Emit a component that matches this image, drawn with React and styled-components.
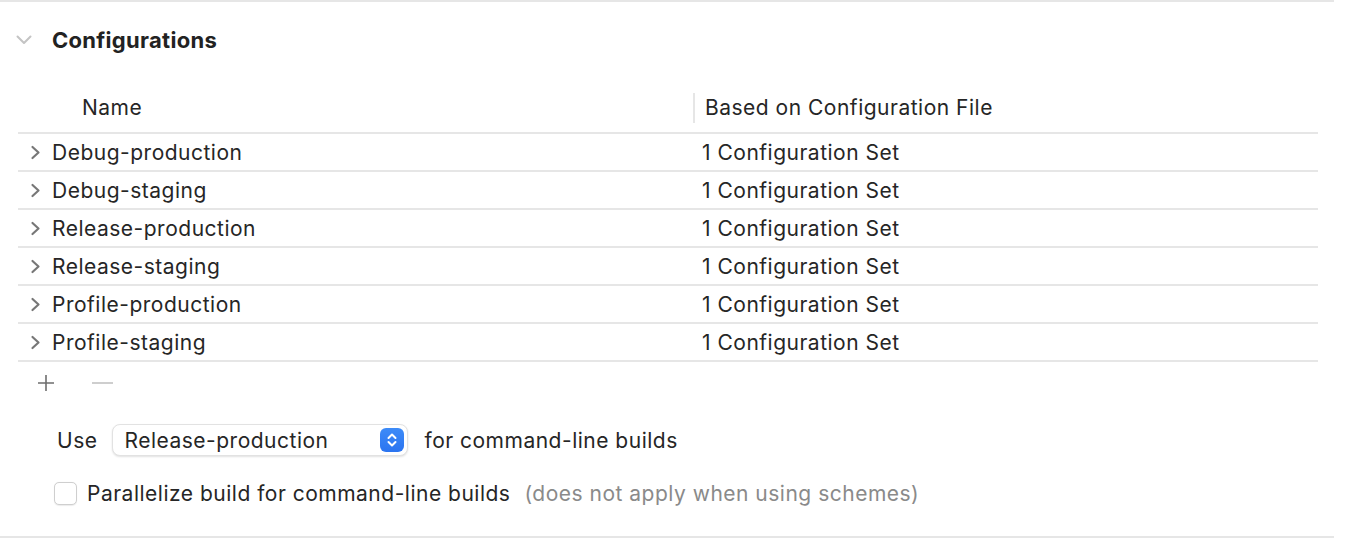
import React from "react";
import styled, { createGlobalStyle } from "styled-components";

const GlobalStyle = createGlobalStyle`
  html, body {
    margin: 0;
    padding: 0;
    background: #ffffff;
  }
  body {
    font-family: Inter, "Noto Sans", "Liberation Sans", sans-serif;
    font-size: 21px;
    letter-spacing: 0.5px;
    color: #262626;
    -webkit-font-smoothing: antialiased;
  }
`;

const Panel = styled.div`
  width: 1334px;
  height: 538px;
  box-sizing: border-box;
  border-top: 2px solid #e6e6e6;
  border-bottom: 2px solid #e6e6e6;
  display: flex;
  flex-direction: column;
`;

const SectionHeader = styled.div`
  height: 76px;
  display: flex;
  align-items: center;
  padding-left: 16px;
  gap: 20px;
`;

const Title = styled.h2`
  margin: 0;
  font-size: 22px;
  font-weight: 700;
  color: #222;
  letter-spacing: 0.3px;
`;

const Table = styled.div`
  margin-left: 18px;
  width: 1300px;
  display: flex;
  flex-direction: column;
`;

const HeaderRow = styled.div`
  height: 56px;
  box-sizing: border-box;
  padding-top: 18px;
  display: grid;
  grid-template-columns: 675px 1fr;
  border-bottom: 2px solid #e6e6e6;
`;

const HeaderCell = styled.div`
  height: 24px;
  display: flex;
  align-items: center;
  line-height: 24px;
  padding-left: ${(p) => p.$pad}px;
  position: relative;
  ${(p) =>
    p.$divider &&
    `
    &::before {
      content: "";
      position: absolute;
      left: 0;
      top: -3px;
      width: 2px;
      height: 30px;
      background: #e6e6e6;
    }
  `}
`;

const Row = styled.div`
  height: 38px;
  box-sizing: border-box;
  border-bottom: 2px solid #e6e6e6;
  display: grid;
  grid-template-columns: 684px 1fr;
  align-items: center;
`;

const NameCell = styled.div`
  display: flex;
  align-items: center;
  gap: 9px;
  padding-left: 10px;
`;

const Disclosure = styled.svg`
  width: 15px;
  height: 15px;
  flex: none;
`;

const Toolbar = styled.div`
  height: 42px;
  display: flex;
  align-items: center;
  padding-left: 37px;
  gap: 37px;
`;

const ToolIcon = styled.svg`
  width: ${(p) => p.$w}px;
  height: 18px;
  display: block;
`;

const Options = styled.div`
  display: flex;
  flex-direction: column;
  padding-top: 20px;
  gap: 25px;
`;

const UseRow = styled.div`
  display: flex;
  align-items: center;
  padding-left: 57px;
`;

const UseLabel = styled.span`
  margin-right: 15px;
`;

const PopUp = styled.div`
  width: 296px;
  height: 32px;
  box-sizing: border-box;
  border-radius: 8px;
  background: #fff;
  border: 1px solid #e2e2e2;
  box-shadow: 0 1px 2px rgba(0, 0, 0, 0.12);
  display: flex;
  align-items: center;
  justify-content: space-between;
  padding: 0 3px 0 11px;
  margin-right: 16px;
`;

const Stepper = styled.div`
  width: 24px;
  height: 24px;
  border-radius: 6px;
  background: linear-gradient(#3d8bf8, #2b74f0);
  display: flex;
  align-items: center;
  justify-content: center;
`;

const CheckRow = styled.label`
  display: flex;
  align-items: center;
  padding-left: 54px;
`;

const CheckBox = styled.span`
  width: 23px;
  height: 23px;
  box-sizing: border-box;
  border-radius: 5px;
  border: 1px solid #cfcfcf;
  background: #fff;
  box-shadow: 0 0.5px 1px rgba(0, 0, 0, 0.08);
  margin-right: 10px;
  flex: none;
`;

const Hint = styled.span`
  color: #8a8a8a;
  margin-left: 14px;
`;

const configs = [
  "Debug-production",
  "Debug-staging",
  "Release-production",
  "Release-staging",
  "Profile-production",
  "Profile-staging",
];

function ChevronRight() {
  return (
    <Disclosure viewBox="0 0 15 15">
      <path
        d="M4.5 2 L10.5 7.5 L4.5 13"
        fill="none"
        stroke="#777"
        strokeWidth="2.2"
        strokeLinecap="round"
        strokeLinejoin="round"
      />
    </Disclosure>
  );
}

export default function App() {
  return (
    <>
      <GlobalStyle />
      <Panel>
        <SectionHeader>
          <svg width="16" height="10" viewBox="0 0 16 10">
            <path
              d="M1.5 1.5 L8 8 L14.5 1.5"
              fill="none"
              stroke="#c4c4c4"
              strokeWidth="2"
              strokeLinecap="round"
              strokeLinejoin="round"
            />
          </svg>
          <Title>Configurations</Title>
        </SectionHeader>

        <Table>
          <HeaderRow>
            <HeaderCell $pad={64}>Name</HeaderCell>
            <HeaderCell $pad={12} $divider>
              Based on Configuration File
            </HeaderCell>
          </HeaderRow>
          {configs.map((name) => (
            <Row key={name}>
              <NameCell>
                <ChevronRight />
                {name}
              </NameCell>
              <div>1 Configuration Set</div>
            </Row>
          ))}
        </Table>

        <Toolbar>
          <ToolIcon $w={18} viewBox="0 0 18 18">
            <path d="M9 1 V17 M1 9 H17" stroke="#6e6e6e" strokeWidth="1.6" />
          </ToolIcon>
          <ToolIcon $w={21} viewBox="0 0 21 18">
            <path d="M0 9 H21" stroke="#c9c9c9" strokeWidth="1.8" />
          </ToolIcon>
        </Toolbar>

        <Options>
          <UseRow>
            <UseLabel>Use</UseLabel>
            <PopUp>
              <span>Release-production</span>
              <Stepper>
                <svg width="12" height="16" viewBox="0 0 12 16">
                  <path
                    d="M2.5 6 L6 2.5 L9.5 6 M2.5 10 L6 13.5 L9.5 10"
                    fill="none"
                    stroke="#fff"
                    strokeWidth="2"
                    strokeLinecap="round"
                    strokeLinejoin="round"
                  />
                </svg>
              </Stepper>
            </PopUp>
            <span>for command-line builds</span>
          </UseRow>
          <CheckRow>
            <CheckBox />
            Parallelize build for command-line builds
            <Hint>(does not apply when using schemes)</Hint>
          </CheckRow>
        </Options>
      </Panel>
    </>
  );
}
